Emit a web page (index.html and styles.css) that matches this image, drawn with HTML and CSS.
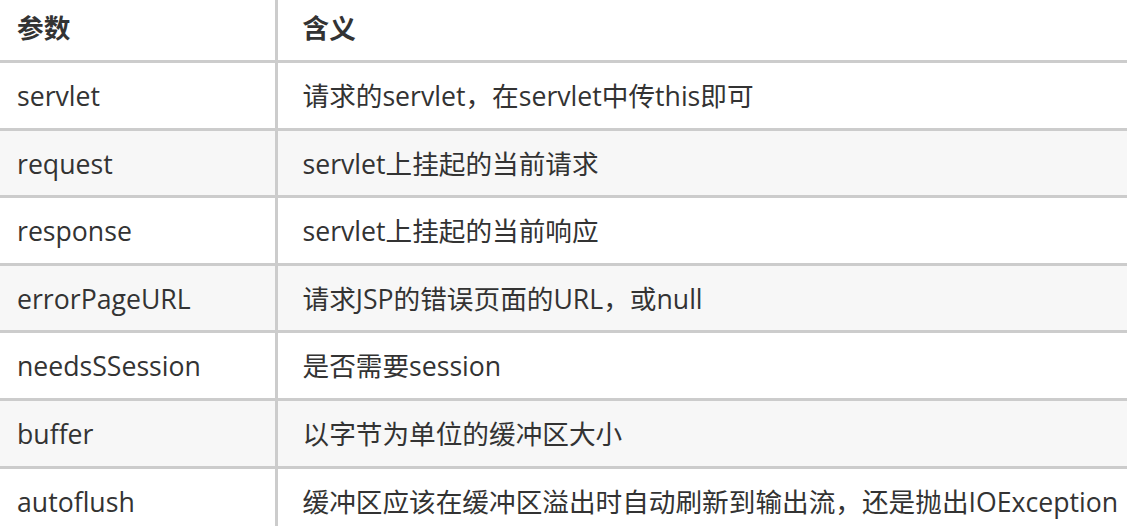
FILE: index.html
```html
<!DOCTYPE html>
<html lang="zh-CN">
<head>
<meta charset="utf-8">
<title>参数表</title>
<link rel="stylesheet" href="styles.css">
</head>
<body>
<table class="params">
  <colgroup>
    <col class="col-name">
    <col class="col-desc">
  </colgroup>
  <thead>
    <tr><th>参数</th><th>含义</th></tr>
  </thead>
  <tbody>
    <tr><td>servlet</td><td>请求的servlet，在servlet中传this即可</td></tr>
    <tr><td>request</td><td>servlet上挂起的当前请求</td></tr>
    <tr><td>response</td><td>servlet上挂起的当前响应</td></tr>
    <tr><td>errorPageURL</td><td>请求JSP的错误页面的URL，或null</td></tr>
    <tr><td>needsSSession</td><td>是否需要session</td></tr>
    <tr><td>buffer</td><td>以字节为单位的缓冲区大小</td></tr>
    <tr><td>autoflush</td><td>缓冲区应该在缓冲区溢出时自动刷新到输出流，还是抛出IOException</td></tr>
  </tbody>
</table>
</body>
</html>
```

FILE: styles.css
```css
html, body {
  margin: 0;
  padding: 0;
  background: #ffffff;
  overflow: hidden;
}

.params {
  border-collapse: collapse;
  table-layout: fixed;
  width: 1180px;
  margin-left: -11px;
  margin-top: -7.6px;
  font-family: "Open Sans", "Noto Sans CJK SC", sans-serif;
  font-size: 26.65px;
  color: #333333;
}

.col-name { width: 285.5px; }

.params th,
.params td {
  border: 3px solid #cccccc;
  height: 62.6px;
  padding: 2px 0 0 25px;
  text-align: left;
  vertical-align: middle;
  white-space: nowrap;
  box-sizing: content-box;
  line-height: 1.3;
}

.params th {
  font-weight: bold;
  background: #ffffff;
}

.params tbody tr:nth-child(odd) td { background: #ffffff; }
.params tbody tr:nth-child(even) td { background: #f7f7f7; }
```
